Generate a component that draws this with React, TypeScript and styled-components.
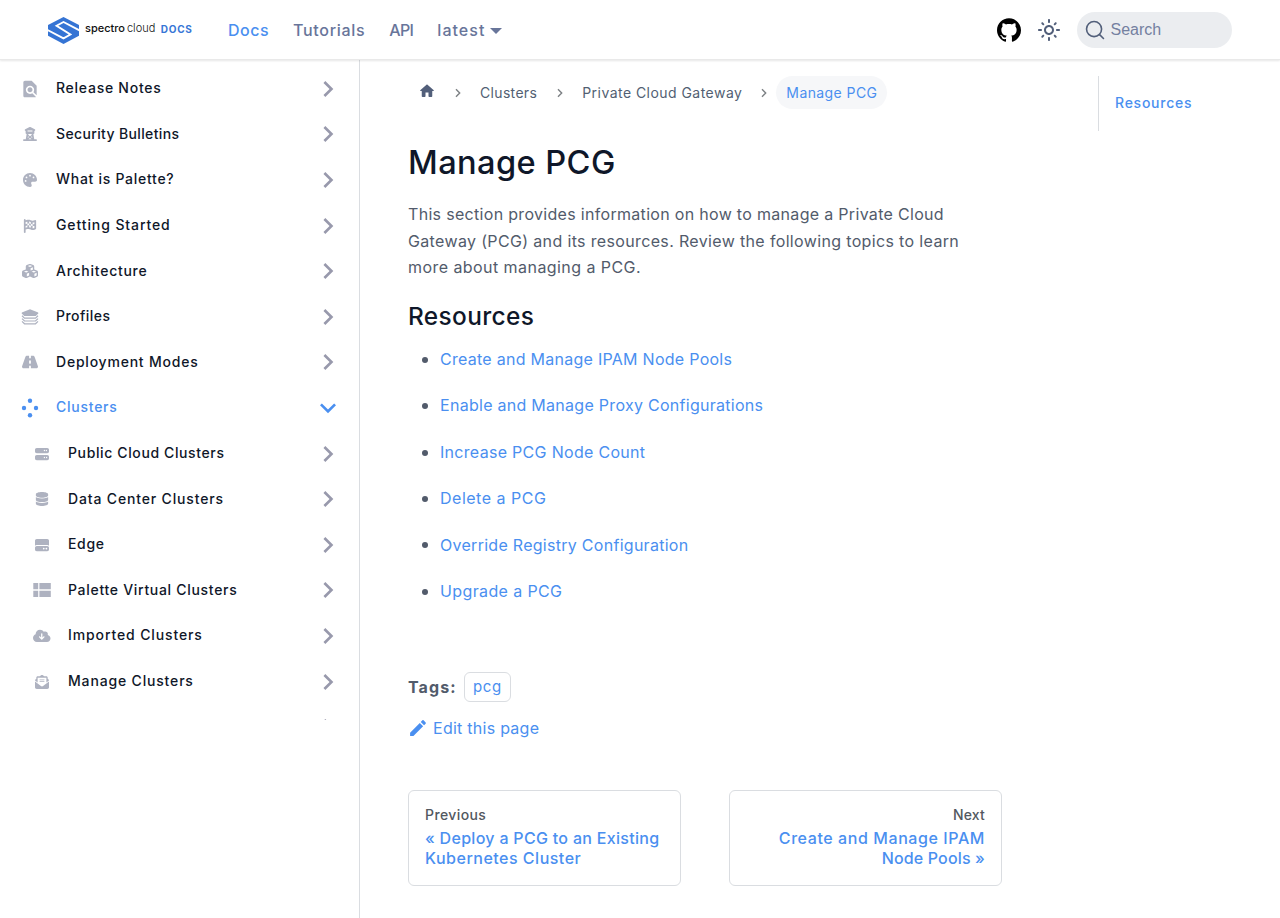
import React from "react";
import styled, { createGlobalStyle, css } from "styled-components";
import {
  FaTowerObservation,
  FaPalette,
  FaFlagCheckered,
  FaCubes,
  FaRoad,
  FaServer,
  FaDatabase,
  FaHardDrive,
  FaCloudArrowDown,
  FaEnvelopeOpenText,
} from "react-icons/fa6";
import { MdFindInPage } from "react-icons/md";

const blue = "#4a8ff0";
const line = "#dadde1";

const GlobalStyle = createGlobalStyle`
  * { box-sizing: border-box; }
  html, body { margin: 0; padding: 0; height: 918px; overflow: hidden; background: #fff; }
  body { font-family: Inter, "Liberation Sans", sans-serif; color: #525b6b; }
  a { color: inherit; text-decoration: none; }
`;

const T = styled.span<{ $t?: number }>`
  letter-spacing: ${(p) => p.$t ?? 0}px;
  white-space: nowrap;
`;

const Page = styled.div`
  display: flex;
  flex-direction: column;
  height: 918px;
`;

const Header = styled.header`
  flex: none;
  height: 60px;
  padding: 0 48px;
  display: flex;
  align-items: center;
  justify-content: space-between;
  background: #fff;
  box-shadow: 0 1px 2px 0 rgba(0, 0, 0, 0.1), inset 0 -1px 0 #e9e9e9;
  z-index: 2;
`;

const NavLeft = styled.nav`
  display: flex;
  align-items: center;
`;

const Brand = styled.a`
  display: flex;
  align-items: center;
  width: 168px;
  height: 32px;
  font-size: 11px;
  line-height: 14px;
  color: #111;
  svg { margin-right: 6px; }
`;

const BrandWord = styled(T)<{ $light?: boolean }>`
  font-weight: ${(p) => (p.$light ? 300 : 500)};
  margin-right: ${(p) => (p.$light ? 5.5 : 2)}px;
  margin-top: -4px;
`;

const BrandTag = styled(T)`
  font-size: 10px;
  font-weight: 700;
  color: #3776d6;
  margin-top: -3px;
`;

const NavLink = styled.a<{ $on?: boolean }>`
  display: flex;
  align-items: center;
  padding: 0 12px;
  font-size: 16px;
  font-weight: 500;
  line-height: 26px;
  margin-top: -1px;
  color: ${(p) => (p.$on ? blue : "#68759a")};
`;

const Caret = styled.span`
  margin: 3px 0 0 5px;
  border: 6.4px solid transparent;
  border-top-color: #68759a;
  border-bottom: 0;
`;

const NavRight = styled.div`
  display: flex;
  align-items: center;
  svg { display: block; }
`;

const ModeButton = styled.span`
  margin: 0 16px;
  color: #525f7a;
`;

const SearchBox = styled.button`
  display: flex;
  align-items: center;
  width: 155px;
  height: 36px;
  padding: 0 8px;
  gap: 5.5px;
  border: 0;
  border-radius: 18px;
  background: #ebedf0;
  font: 16px "Liberation Sans", Arial, sans-serif;
  color: #7480a0;
`;

const Body = styled.div`
  flex: 1;
  display: flex;
  min-height: 0;
`;

const Sidebar = styled.aside`
  flex: none;
  width: 360px;
  border-right: 1px solid ${line};
`;

const Menu = styled.div`
  height: 660px;
  padding-top: 6px;
  overflow: hidden;
`;

const MenuRow = styled.a<{ $deep?: boolean; $on?: boolean }>`
  display: flex;
  align-items: center;
  height: 45.6px;
  padding: 0 15px 0 ${(p) => (p.$deep ? 32 : 20)}px;
  font-size: 14px;
  font-weight: 500;
  line-height: 18px;
  color: ${(p) => (p.$on ? blue : "#0f1729")};
`;

const RowIcon = styled.span<{ $on?: boolean }>`
  display: flex;
  justify-content: center;
  width: 20px;
  margin: 0 16px 0 0;
  color: ${(p) => (p.$on ? blue : "#aeb2c0")};
`;

const RowLabel = styled(T)`
  flex: 1;
  margin-top: -1px;
`;

const RowArrow = styled.svg<{ $open?: boolean }>`
  display: block;
  width: 32px;
  height: 32px;
  flex: none;
  fill: ${(p) => (p.$open ? blue : "#9899ac")};
  transform: rotate(${(p) => (p.$open ? 180 : 90)}deg);
`;

const Main = styled.main`
  flex: none;
  width: 642px;
  padding: 16px 0 0 48px;
`;

const Crumbs = styled.nav`
  display: flex;
  align-items: center;
  height: 33px;
  font-size: 14px;
  line-height: 23px;
  color: #525f73;
`;

const Crumb = styled.a<{ $on?: boolean }>`
  display: flex;
  align-items: center;
  height: 33px;
  padding: 0 10px 1px;
  border-radius: 17px;
  ${(p) =>
    p.$on &&
    css`
      color: ${blue};
      background: #f6f7f9;
    `}
`;

const HomeIcon = styled.svg`
  display: block;
  margin-bottom: 3px;
`;

const CrumbSep = styled.svg<{ $l: number; $r: number }>`
  display: block;
  flex: none;
  margin: 1px ${(p) => p.$r}px 0 ${(p) => p.$l}px;
`;

const Title = styled.h1`
  margin: 33px 0 0;
  font-size: 32.6px;
  font-weight: 500;
  line-height: 40px;
  color: #0f1729;
`;

const Para = styled.p`
  margin: 19px 0 0;
  font-size: 16px;
  line-height: 26.5px;
  ${T} { display: block; }
`;

const Section = styled.h2`
  margin: 20px 0 0;
  font-size: 24.4px;
  font-weight: 500;
  line-height: 30px;
  color: #0f1729;
`;

const Links = styled.ul`
  display: flex;
  flex-direction: column;
  gap: 20px;
  margin: 15.5px 0 0;
  padding: 0;
  list-style: none;
  font-size: 16px;
  line-height: 26.4px;
`;

const LinkItem = styled.li`
  display: flex;
  align-items: center;
  padding-left: 14px;
  color: ${blue};
  &::before {
    content: "";
    width: 6px;
    height: 6px;
    margin: 1px 12px 0 0;
    border-radius: 50%;
    background: #525b6b;
  }
`;

const Tags = styled.div`
  display: flex;
  align-items: center;
  height: 30px;
  margin-top: 67.5px;
  font-size: 16px;
`;

const TagsTitle = styled(T)`
  width: 56px;
  font-weight: 700;
`;

const Tag = styled.a`
  display: flex;
  align-items: center;
  justify-content: center;
  width: 47px;
  height: 30px;
  border: 1px solid ${line};
  border-radius: 6px;
  font-size: 15px;
  color: ${blue};
`;

const Edit = styled.a`
  display: flex;
  align-items: center;
  margin-top: 13px;
  height: 26px;
  font-size: 16px;
  color: ${blue};
  svg { margin-right: 5px; }
`;

const Pager = styled.nav`
  display: grid;
  grid-template-columns: 1fr 1fr;
  gap: 48px;
  margin-top: 49px;
`;

const PageCard = styled.a<{ $next?: boolean }>`
  display: flex;
  flex-direction: column;
  align-items: ${(p) => (p.$next ? "flex-end" : "flex-start")};
  height: 96px;
  padding: 15px 16px;
  border: 1px solid ${line};
  border-radius: 6px;
  font-size: 16px;
  font-weight: 500;
  line-height: 20px;
  color: ${blue};
`;

const PageHint = styled(T)`
  font-size: 14px;
  line-height: 18px;
  margin-bottom: 4px;
  color: #525860;
`;

const Toc = styled.aside`
  height: 55px;
  margin: 16px 0 0 96px;
  padding: 18px 16px;
  border-left: 1px solid ${line};
  font-size: 14px;
  font-weight: 500;
  line-height: 18px;
  color: ${blue};
`;

const LayersIcon = () => (
  <svg width="18" height="16" viewBox="0 0 18 16">
    <path d="M9 0.3 17.2 3.4V4.6L14.8 7H3.2L0.8 4.6V3.4Z" fill="currentColor" />
    <path
      d="M1 6.8 3.5 9.2H14.5L17 6.8M1 9.6 3.5 12H14.5L17 9.6M1 12.4 3.5 14.8H14.5L17 12.4"
      fill="none"
      stroke="currentColor"
      strokeWidth="1.2"
    />
  </svg>
);

const ClusterIcon = () => (
  <svg width="18" height="20" viewBox="0 0 18 20" fill="currentColor">
    <circle cx="9" cy="2.7" r="2.2" />
    <circle cx="3" cy="10" r="2.2" />
    <circle cx="15" cy="10" r="2.2" />
    <circle cx="9" cy="17.3" r="2.2" />
  </svg>
);

const TableIcon = () => (
  <svg width="18" height="14" viewBox="0 0 18 14" fill="currentColor">
    <path d="M.3 0h4.9v6.2H.3zM6.4 0h11.4v6.2H6.4zM.3 7.8h4.9V14H.3zM6.4 7.8h11.4V14H6.4z" />
  </svg>
);

type Item = { label: string; t: number; icon?: React.ReactNode; deep?: boolean; on?: boolean };

const items: Item[] = [
  { label: "Release Notes", t: 0.74, icon: <MdFindInPage size={20} /> },
  { label: "Security Bulletins", t: 0.36, icon: <FaTowerObservation size={14} /> },
  { label: "What is Palette?", t: 0.72, icon: <FaPalette size={14} /> },
  { label: "Getting Started", t: 0.9, icon: <FaFlagCheckered size={14} /> },
  { label: "Architecture", t: 0.74, icon: <FaCubes size={16} /> },
  { label: "Profiles", t: 0.46, icon: <LayersIcon /> },
  { label: "Deployment Modes", t: 0.78, icon: <FaRoad size={16} /> },
  { label: "Clusters", t: 0.75, icon: <ClusterIcon />, on: true },
  { label: "Public Cloud Clusters", t: 0.62, icon: <FaServer size={14} />, deep: true },
  { label: "Data Center Clusters", t: 0.84, icon: <FaDatabase size={14} />, deep: true },
  { label: "Edge", t: 0.66, icon: <FaHardDrive size={14} />, deep: true },
  { label: "Palette Virtual Clusters", t: 0.7, icon: <TableIcon />, deep: true },
  { label: "Imported Clusters", t: 0.88, icon: <FaCloudArrowDown size={17.5} />, deep: true },
  { label: "Manage Clusters", t: 0.83, icon: <FaEnvelopeOpenText size={14} />, deep: true },
  { label: "", t: 0, deep: true },
];

const links: [string, number][] = [
  ["Create and Manage IPAM Node Pools", 0.27],
  ["Enable and Manage Proxy Configurations", 0.28],
  ["Increase PCG Node Count", 0.3],
  ["Delete a PCG", 0.5],
  ["Override Registry Configuration", 0.28],
  ["Upgrade a PCG", 0.38],
];

const Separator = ({ l, r }: { l: number; r: number }) => (
  <CrumbSep $l={l} $r={r} width="6" height="10" viewBox="0 0 6 10">
    <path d="M1 1.2 4.7 5 1 8.8" fill="none" stroke="#7c8084" strokeWidth="1.4" />
  </CrumbSep>
);

export default function App() {
  return (
    <Page>
      <GlobalStyle />
      <Header>
        <NavLeft>
          <Brand href="#">
            <svg width="31" height="27" viewBox="0 0 31 27">
              <path d="M15.5 0 31 8V18.8L15.5 27 0 18.8V8Z" fill="#3574d4" />
              <path
                d="M32 13.6 15.5 5 8.6 8.7 22.4 17.5 15.5 21.3 -1 12.7"
                fill="none"
                stroke="#fff"
                strokeWidth="1.9"
              />
            </svg>
            <BrandWord>spectro</BrandWord>
            <BrandWord $light>cloud</BrandWord>
            <BrandTag $t={0.7}>DOCS</BrandTag>
          </Brand>
          <NavLink $on><T $t={0.5}>Docs</T></NavLink>
          <NavLink><T $t={0.68}>Tutorials</T></NavLink>
          <NavLink><T $t={-0.6}>API</T></NavLink>
          <NavLink><T $t={1.02}>latest</T><Caret /></NavLink>
        </NavLeft>
        <NavRight>
          <svg width="24" height="24" viewBox="0 0 24 24">
            <path d="M12 .297c-6.63 0-12 5.373-12 12 0 5.303 3.438 9.8 8.205 11.385.6.113.82-.258.82-.577 0-.285-.01-1.04-.015-2.04-3.338.724-4.042-1.61-4.042-1.61C4.422 18.07 3.633 17.7 3.633 17.7c-1.087-.744.084-.729.084-.729 1.205.084 1.838 1.236 1.838 1.236 1.07 1.835 2.809 1.305 3.495.998.108-.776.417-1.305.76-1.605-2.665-.3-5.466-1.332-5.466-5.93 0-1.31.465-2.38 1.235-3.22-.135-.303-.54-1.523.105-3.176 0 0 1.005-.322 3.3 1.23.96-.267 1.98-.399 3-.405 1.02.006 2.04.138 3 .405 2.28-1.552 3.285-1.23 3.285-1.23.645 1.653.24 2.873.12 3.176.765.84 1.23 1.91 1.23 3.22 0 4.61-2.805 5.625-5.475 5.92.42.36.81 1.096.81 2.22 0 1.606-.015 2.896-.015 3.286 0 .315.21.69.825.57C20.565 22.092 24 17.592 24 12.297c0-6.627-5.373-12-12-12" />
          </svg>
          <ModeButton>
            <svg width="24" height="24" viewBox="0 0 24 24">
              <path
                fill="currentColor"
                d="M12,9c1.65,0,3,1.35,3,3s-1.35,3-3,3s-3-1.35-3-3S10.35,9,12,9 M12,7c-2.76,0-5,2.24-5,5s2.24,5,5,5s5-2.24,5-5 S14.76,7,12,7L12,7z M2,13l2,0c0.55,0,1-0.45,1-1s-0.45-1-1-1l-2,0c-0.55,0-1,0.45-1,1S1.45,13,2,13z M20,13l2,0c0.55,0,1-0.45,1-1 s-0.45-1-1-1l-2,0c-0.55,0-1,0.45-1,1S19.45,13,20,13z M11,2v2c0,0.55,0.45,1,1,1s1-0.45,1-1V2c0-0.55-0.45-1-1-1S11,1.45,11,2z M11,20v2c0,0.55,0.45,1,1,1s1-0.45,1-1v-2c0-0.55-0.45-1-1-1C11.45,19,11,19.45,11,20z M5.99,4.58c-0.39-0.39-1.03-0.39-1.41,0 c-0.39,0.39-0.39,1.03,0,1.41l1.06,1.06c0.39,0.39,1.03,0.39,1.41,0s0.39-1.03,0-1.41L5.99,4.58z M18.36,16.95 c-0.39-0.39-1.03-0.39-1.41,0c-0.39,0.39-0.39,1.03,0,1.41l1.06,1.06c0.39,0.39,1.03,0.39,1.41,0c0.39-0.39,0.39-1.03,0-1.41 L18.36,16.95z M19.42,5.99c0.39-0.39,0.39-1.03,0-1.41c-0.39-0.39-1.03-0.39-1.41,0l-1.06,1.06c-0.39,0.39-0.39,1.03,0,1.41 s1.03,0.39,1.41,0L19.42,5.99z M7.05,18.36c0.39-0.39,0.39-1.03,0-1.41c-0.39-0.39-1.03-0.39-1.41,0l-1.06,1.06 c-0.39,0.39-0.39,1.03,0,1.41s1.03,0.39,1.41,0L7.05,18.36z"
              />
            </svg>
          </ModeButton>
          <SearchBox>
            <svg width="20" height="20" viewBox="0 0 20 20">
              <path
                d="M14.386 14.386l4.0877 4.0877-4.0877-4.0877c-2.9418 2.9419-7.7115 2.9419-10.6533 0-2.9419-2.9418-2.9419-7.7115 0-10.6533 2.9418-2.9419 7.7115-2.9419 10.6533 0 2.9419 2.9418 2.9419 7.7115 0 10.6533z"
                fill="none"
                stroke="#525f7a"
                strokeWidth="1.6"
                strokeLinecap="round"
                strokeLinejoin="round"
              />
            </svg>
            Search
          </SearchBox>
        </NavRight>
      </Header>
      <Body>
        <Sidebar>
          <Menu>
            {items.map((it, i) => (
              <MenuRow key={i} $deep={it.deep} $on={it.on}>
                <RowIcon $on={it.on}>{it.icon}</RowIcon>
                <RowLabel $t={it.t}>{it.label}</RowLabel>
                <RowArrow $open={it.on} viewBox="0 0 24 24">
                  <path d="M7.41 15.41L12 10.83l4.59 4.58L18 14l-6-6-6 6z" />
                </RowArrow>
              </MenuRow>
            ))}
          </Menu>
        </Sidebar>
        <Main>
          <Crumbs>
            <Crumb>
              <HomeIcon width="18" height="18" viewBox="0 0 24 24">
                <path d="M10 19v-5h4v5c0 .55.45 1 1 1h3c.55 0 1-.45 1-1v-7h1.7c.46 0 .68-.57.33-.87L12.67 3.6c-.38-.34-.96-.34-1.34 0l-8.36 7.53c-.34.3-.13.87.33.87H5v7c0 .55.45 1 1 1h3c.55 0 1-.45 1-1z" fill="#525f7a" />
              </HomeIcon>
            </Crumb>
            <Separator l={9} r={9} />
            <Crumb><T $t={0.33}>Clusters</T></Crumb>
            <Separator l={10} r={9} />
            <Crumb><T $t={0.46}>Private Cloud Gateway</T></Crumb>
            <Separator l={9} r={9} />
            <Crumb $on><T $t={0.41}>Manage PCG</T></Crumb>
          </Crumbs>
          <Title><T $t={0.42}>Manage PCG</T></Title>
          <Para>
            <T $t={0.31}>This section provides information on how to manage a Private Cloud</T>
            <T $t={0.35}>Gateway (PCG) and its resources. Review the following topics to learn</T>
            <T $t={0.44}>more about managing a PCG.</T>
          </Para>
          <Section><T $t={0.38}>Resources</T></Section>
          <Links>
            {links.map(([label, t]) => (
              <LinkItem key={label}><a href="#"><T $t={t}>{label}</T></a></LinkItem>
            ))}
          </Links>
          <Tags>
            <TagsTitle $t={1.1}>Tags:</TagsTitle>
            <Tag><T $t={0.68}>pcg</T></Tag>
          </Tags>
          <Edit>
            <svg width="20" height="20" viewBox="1 1 38 38" fill="currentColor">
              <path d="m34.5 11.7l-3 3.1-6.3-6.3 3.1-3q0.5-0.5 1.2-0.5t1.1 0.5l3.9 3.9q0.5 0.4 0.5 1.1t-0.5 1.2z m-29.5 17.1l18.4-18.5 6.3 6.3-18.4 18.4h-6.3v-6.2z" />
            </svg>
            <T $t={0.26}>Edit this page</T>
          </Edit>
          <Pager>
            <PageCard>
              <PageHint $t={0.4}>Previous</PageHint>
              <T $t={0.3}>« Deploy a PCG to an Existing</T>
              <T $t={0.5}>Kubernetes Cluster</T>
            </PageCard>
            <PageCard $next>
              <PageHint $t={0.18}>Next</PageHint>
              <T $t={0.58}>Create and Manage IPAM</T>
              <T $t={0.15}>Node Pools »</T>
            </PageCard>
          </Pager>
        </Main>
        <Toc><T $t={0.75}>Resources</T></Toc>
      </Body>
    </Page>
  );
}
